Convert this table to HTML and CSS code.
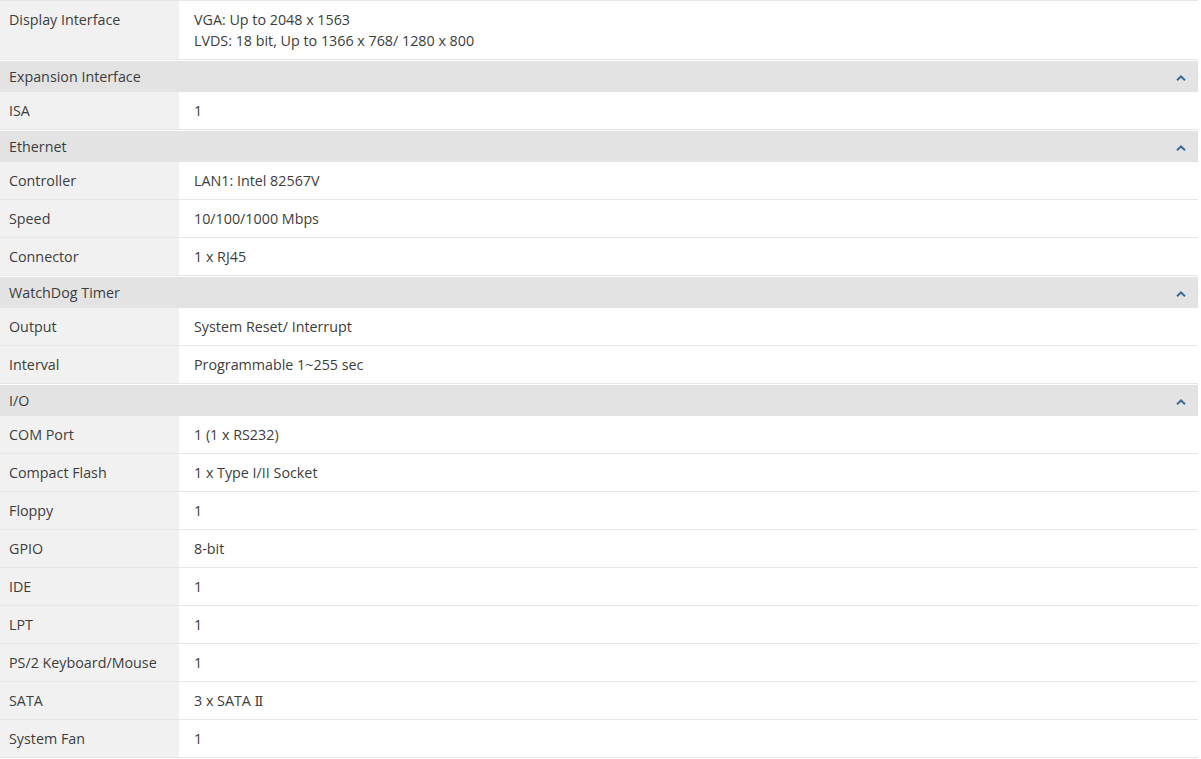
FILE: index.html
```html
<!DOCTYPE html>
<html lang="en">
<head>
<meta charset="utf-8">
<title>Specifications</title>
<link rel="stylesheet" href="styles.css">
</head>
<body>
<div class="specs">
  <div class="row">
    <div class="label">Display Interface</div>
    <div class="value">VGA: Up to 2048 x 1563<br>LVDS: 18 bit, Up to 1366 x 768/ 1280 x 800</div>
  </div>

  <div class="section">
    <div class="section-head"><span>Expansion Interface</span><svg class="chev" viewBox="0 0 10 6" width="10" height="6"><path d="M1 5.2 L5 1.4 L9 5.2" /></svg></div>
    <div class="row"><div class="label">ISA</div><div class="value">1</div></div>
  </div>

  <div class="section">
    <div class="section-head"><span>Ethernet</span><svg class="chev" viewBox="0 0 10 6" width="10" height="6"><path d="M1 5.2 L5 1.4 L9 5.2" /></svg></div>
    <div class="row"><div class="label">Controller</div><div class="value">LAN1: Intel 82567V</div></div>
    <div class="row"><div class="label">Speed</div><div class="value">10/100/1000 Mbps</div></div>
    <div class="row"><div class="label">Connector</div><div class="value">1 x RJ45</div></div>
  </div>

  <div class="section">
    <div class="section-head"><span>WatchDog Timer</span><svg class="chev" viewBox="0 0 10 6" width="10" height="6"><path d="M1 5.2 L5 1.4 L9 5.2" /></svg></div>
    <div class="row"><div class="label">Output</div><div class="value">System Reset/ Interrupt</div></div>
    <div class="row"><div class="label">Interval</div><div class="value">Programmable 1~255 sec</div></div>
  </div>

  <div class="section">
    <div class="section-head"><span>I/O</span><svg class="chev" viewBox="0 0 10 6" width="10" height="6"><path d="M1 5.2 L5 1.4 L9 5.2" /></svg></div>
    <div class="row"><div class="label">COM Port</div><div class="value">1 (1 x RS232)</div></div>
    <div class="row"><div class="label">Compact Flash</div><div class="value">1 x Type I/II Socket</div></div>
    <div class="row"><div class="label">Floppy</div><div class="value">1</div></div>
    <div class="row"><div class="label">GPIO</div><div class="value">8-bit</div></div>
    <div class="row"><div class="label">IDE</div><div class="value">1</div></div>
    <div class="row"><div class="label">LPT</div><div class="value">1</div></div>
    <div class="row"><div class="label">PS/2 Keyboard/Mouse</div><div class="value">1</div></div>
    <div class="row"><div class="label">SATA</div><div class="value">3 x SATA <span class="roman">Ⅱ</span></div></div>
    <div class="row"><div class="label">System Fan</div><div class="value">1</div></div>
  </div>
</div>
</body>
</html>
```

FILE: styles.css
```css
html, body {
  margin: 0;
  padding: 0;
  background: #ffffff;
}

body {
  font-family: "Open Sans", "Noto Sans", "Liberation Sans", sans-serif;
  font-size: 14.3px;
  color: #3d3d3d;
}

.specs {
  width: 1198px;
  border-top: 1px solid #e6e6e6;
}

.row {
  display: flex;
  border-bottom: 1px solid #e6e6e6;
  line-height: 21px;
}

.label {
  width: 179px;
  flex: none;
  box-sizing: border-box;
  background: #f1f1f1;
  padding: 8px 9px;
}

.value {
  flex: 1;
  padding: 8px 15px;
  background: #ffffff;
}

.roman {
  font-family: "DejaVu Serif", "Liberation Serif", serif;
  font-size: 13px;
  line-height: 0;
}

.section {
  border-top: 1px solid #ffffff;
}

.section-head {
  display: flex;
  align-items: center;
  justify-content: space-between;
  height: 31px;
  background: #e3e3e3;
  padding: 0 12px 0 9px;
  line-height: 21px;
}

.chev {
  display: block;
  fill: none;
  stroke: #3a6d99;
  stroke-width: 2;
  stroke-linecap: butt;
  stroke-linejoin: miter;
  margin-top: 2px;
}
```
